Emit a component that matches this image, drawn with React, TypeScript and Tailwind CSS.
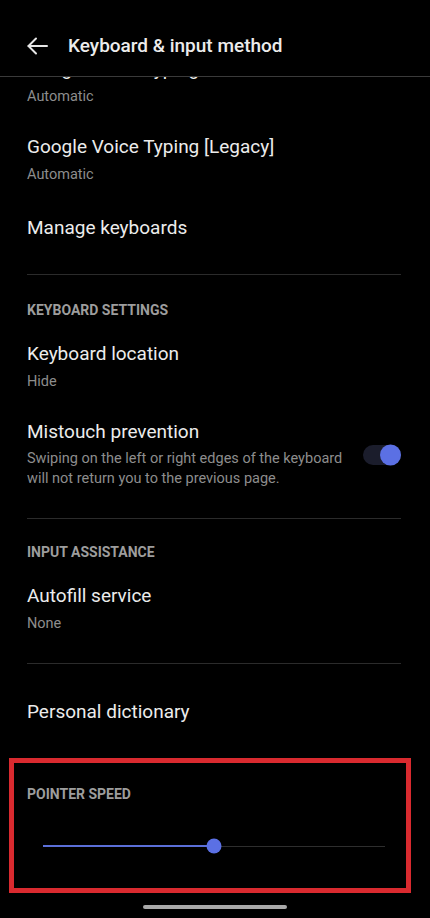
import React from "react";

const font = { fontFamily: "Roboto, 'Noto Sans', 'Liberation Sans', sans-serif" };

type ItemProps = {
  title: string;
  subtitle?: string;
  className?: string;
};

const Item = ({ title, subtitle, className = "" }: ItemProps) => (
  <div className={className}>
    <div className="text-[19px] leading-[24px] text-[#ececec]">{title}</div>
    {subtitle && (
      <div className="mt-[6px] text-[14.5px] leading-[20px] text-[#8d8d8d]">{subtitle}</div>
    )}
  </div>
);

const SectionHeader = ({ label, className = "" }: { label: string; className?: string }) => (
  <div className={`text-[14px] leading-[18px] font-bold text-[#9d9d9d] ${className}`}>
    {label}
  </div>
);

const Divider = () => <div className="h-px bg-[#2b2b2b]" />;

const Toggle = () => (
  <div className="relative ml-4 h-[20px] w-[38px] shrink-0 rounded-full bg-[#1b1d2c]">
    <div className="absolute right-0 top-1/2 h-[21px] w-[21px] -translate-y-1/2 rounded-full bg-[#5b70e4]" />
  </div>
);

const App = () => {
  return (
    <div className="h-[918px] w-full overflow-hidden bg-black" style={font}>
      {/* Top bar */}
      <div className="flex h-[77px] items-center border-b border-[#3a3a3a] pl-[27px] pt-[16px]">
        <svg width="21" height="18" viewBox="0 0 21 18" fill="none" stroke="#e6e6e6" strokeWidth="2" strokeLinecap="round" strokeLinejoin="round">
          <path d="M20 9H1.5" />
          <path d="M9 1.5L1.5 9L9 16.5" />
        </svg>
        <span className="ml-[20px] text-[19px] font-medium leading-[24px] text-[#ececec]">
          Keyboard &amp; input method
        </span>
      </div>

      {/* Scrolling list */}
      <div className="h-[681px] overflow-hidden pl-[27px] pr-[29px]">
        <Item className="-mt-[35px] pt-[15px] pb-[13px]" title="Google Voice Typing" subtitle="Automatic" />
        <Item className="pt-[15px] pb-[13px]" title="Google Voice Typing [Legacy]" subtitle="Automatic" />
        <Item className="pt-[18px] pb-[34px]" title="Manage keyboards" />
        <Divider />

        <SectionHeader className="pt-[26px] pb-[8px]" label="KEYBOARD SETTINGS" />
        <Item className="pt-[15px] pb-[13px]" title="Keyboard location" subtitle="Hide" />
        <div className="flex items-center pt-[15px] pb-[29px]">
          <div className="flex-1 min-w-0">
            <div className="text-[19px] leading-[24px] text-[#ececec]">Mistouch prevention</div>
            <div className="mt-[5px] text-[14.5px] leading-[20px] text-[#8d8d8d]">
              Swiping on the left or right edges of the keyboard
              <br />
              will not return you to the previous page.
            </div>
          </div>
          <Toggle />
        </div>
        <Divider />

        <SectionHeader className="pt-[24px] pb-[8px]" label="INPUT ASSISTANCE" />
        <Item className="pt-[15px] pb-[29px]" title="Autofill service" subtitle="None" />
        <Divider />

        <Item className="pt-[36px]" title="Personal dictionary" />
      </div>

      {/* Pointer speed (highlighted) */}
      <div className="ml-[9px] mr-[19px] h-[135px] border-[5px] border-[#d92a2f] pl-[13px] pt-[22px]">
        <SectionHeader label="POINTER SPEED" />
        <div className="relative ml-[16px] mr-[21px] mt-[33px] flex h-[20px] items-center">
          <div className="h-[2px] w-1/2 bg-[#5b6fd8]" />
          <div className="h-px flex-1 bg-[#2e2e2e]" />
          <div className="absolute left-1/2 top-1/2 h-[15px] w-[15px] -translate-x-1/2 -translate-y-1/2 rounded-full bg-[#5b70e4]" />
        </div>
      </div>

      {/* Home indicator */}
      <div className="mt-[12px] flex justify-center">
        <div className="h-[4px] w-[144px] rounded-full bg-[#a9a9a9]" />
      </div>
    </div>
  );
};

export default App;
